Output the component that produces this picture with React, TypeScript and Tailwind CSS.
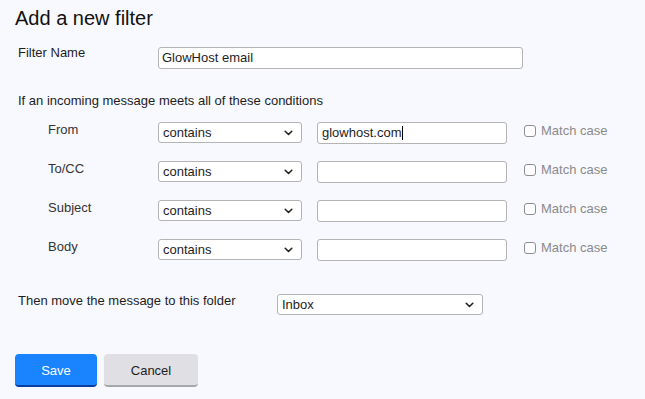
const rows = ["From", "To/CC", "Subject", "Body"];

function Chevron() {
  return (
    <svg width="9" height="6" viewBox="0 0 9 6" className="absolute right-[8px] top-1/2 -translate-y-1/2" aria-hidden="true">
      <path d="M1.2 1.3 L4.5 4.5 L7.8 1.3" fill="none" stroke="#222" strokeWidth="1.6" strokeLinecap="round" strokeLinejoin="round" />
    </svg>
  );
}

function FakeSelect({ value, width }: { value: string; width: string }) {
  return (
    <div className={`relative h-[21px] ${width} rounded-[3px] border border-[#b4b4b4] bg-white pl-[4px] text-[13px] leading-[19px] text-[#1d1d1d]`}>
      {value}
      <Chevron />
    </div>
  );
}

function TextBox({ value, caret }: { value?: string; caret?: boolean }) {
  return (
    <div className="flex h-[22px] w-[190px] items-center rounded-[3px] border border-[#b4b4b4] bg-white pl-[4px] text-[13px] text-[#1d1d1d]">
      {value}
      {caret && <span className="ml-[1px] inline-block h-[14px] w-px bg-black" />}
    </div>
  );
}

export default function App() {
  return (
    <div className="min-h-[399px] w-[645px] bg-[#f8f9fe] pl-[15px] font-['Liberation_Sans',Arial,sans-serif] text-[13px] text-[#1d1d1d]">
      <h1 className="pt-[6px] text-[20px] leading-[24px] text-[#111]">Add a new filter</h1>

      {/* Filter name */}
      <div className="mt-[17px] flex items-start pl-[3px]">
        <label className="w-[140px] leading-[12px]">Filter Name</label>
        <div className="flex h-[22px] w-[365px] items-center rounded-[3px] border border-[#b4b4b4] bg-white pl-[3px] text-[13px]">
          GlowHost email
        </div>
      </div>

      <p className="mt-[24px] pl-[3px] leading-[16px]">If an incoming message meets all of these conditions</p>

      {/* Conditions */}
      <div className="mt-[13px] flex flex-col gap-[17px]">
        {rows.map((r, i) => (
          <div key={r} className="flex items-start">
            <span className="w-[143px] pl-[33px] leading-[15px] text-[#333]">{r}</span>
            <FakeSelect value="contains" width="w-[144px]" />
            <div className="ml-[15px]">
              <TextBox value={i === 0 ? "glowhost.com" : undefined} caret={i === 0} />
            </div>
            <div className="ml-[17px] flex items-center gap-[5px] pt-[1px] leading-[16px] text-[#8a8a8a]">
              <span className="h-[12px] w-[12px] rounded-[3px] border border-[#8f8f8f] bg-white" />
              Match case
            </div>
          </div>
        ))}
      </div>

      {/* Folder */}
      <div className="mt-[33px] flex items-start pl-[3px]">
        <span className="w-[259px] leading-[14px]">Then move the message to this folder</span>
        <FakeSelect value="Inbox" width="w-[206px]" />
      </div>

      <div className="mt-[39px] flex gap-[7px]">
        <button className="h-[33px] w-[82px] rounded-[4px] border-b-2 border-[#0b3e9e] bg-[#1a84ff] pt-[2px] text-[13px] text-white">
          Save
        </button>
        <button className="h-[33px] w-[94px] rounded-[4px] border-b-2 border-[#a6a6ab] bg-[#e0dfe4] pt-[2px] text-[13px] text-[#1d1d1d]">
          Cancel
        </button>
      </div>
    </div>
  );
}
